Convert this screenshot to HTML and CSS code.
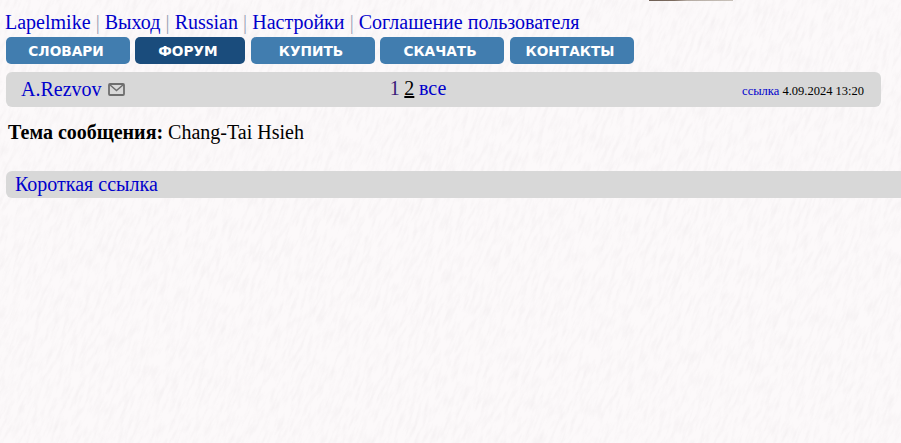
FILE: index.html
```html
<!DOCTYPE html>
<html lang="ru">
<head>
<meta charset="utf-8">
<title>Chang-Tai Hsieh</title>
<link rel="stylesheet" href="styles.css">
</head>
<body>
<div class="logo-edge"></div>
<nav class="toplinks">
  <a href="#">Lapelmike</a> <span class="sep">|</span> <a href="#">Выход</a> <span class="sep">|</span> <a href="#">Russian</a> <span class="sep">|</span> <a href="#">Настройки</a> <span class="sep">|</span> <a href="#">Соглашение пользователя</a>
</nav>
<div class="menu">
  <a class="btn" href="#">СЛОВАРИ</a>
  <a class="btn btn-forum btn-active" href="#">ФОРУМ</a>
  <a class="btn" href="#">КУПИТЬ</a>
  <a class="btn btn-gap" href="#">СКАЧАТЬ</a>
  <a class="btn" href="#">КОНТАКТЫ</a>
</div>
<div class="postbar">
  <div class="author">
    <a href="#">A.Rezvov</a>
    <svg class="mail" width="17" height="13" viewBox="0 0 17 13" aria-hidden="true"><rect x="1" y="1" width="15" height="11" rx="1" fill="none" stroke="#6e6e6e" stroke-width="1.800"/><path d="M1.500 1.500 8.500 7.500l7-6" fill="none" stroke="#6e6e6e" stroke-width="1.500"/></svg>
  </div>
  <div class="pages"><a class="visited" href="#">1</a> <b class="current">2</b> <a href="#">все</a></div>
  <div class="stamp"><a href="#">ссылка</a> 4.09.2024 13:20</div>
</div>
<p class="subject"><b>Тема сообщения:</b> Chang-Tai Hsieh</p>
<div class="shortlink"><a href="#">Короткая ссылка</a></div>
</body>
</html>
```

FILE: styles.css
```css
html, body { height: 100%; }
body {
  margin: 0;
  overflow: hidden;
  font-family: "Liberation Serif", serif;
  color: #000;
  background-color: #fcf9fa;
  background-image: url("data:image/svg+xml,%3Csvg xmlns='http://www.w3.org/2000/svg' width='901' height='443'%3E%3Cfilter id='t' x='0' y='0' width='100%25' height='100%25'%3E%3CfeTurbulence type='fractalNoise' baseFrequency='0.28 0.06' numOctaves='3' seed='7'/%3E%3CfeColorMatrix values='0 0 0 0 0.72 0 0 0 0 0.68 0 0 0 0 0.70 1.6 0 0 0 -0.66'/%3E%3C/filter%3E%3Cg transform='rotate(22 450 220)'%3E%3Crect x='-300' y='-400' width='1500' height='1300' filter='url(%23t)' opacity='.3'/%3E%3C/g%3E%3C/svg%3E");
}
a { color: #0000cc; text-decoration: none; }
.logo-edge {
  position: absolute;
  left: 649px;
  top: 0;
  width: 84px;
  height: 1px;
  background: linear-gradient(90deg, #6f5f55 0, #7d6c60 30%, #b5aba3 45%, #c9c2bb 100%);
}
.toplinks {
  padding: 11px 0 0 5px;
  height: 26px;
  font-size: 20px;
  line-height: 23px;
  word-spacing: 0.100px;
  white-space: nowrap;
}
.sep { color: #9aa3b5; }
.menu {
  display: flex;
  gap: 5px;
  margin-left: 6px;
}
.btn {
  display: block;
  width: 124px;
  height: 27px;
  box-sizing: border-box;
  padding-right: 4px;
  border-radius: 5px;
  background: #417daf;
  color: #fff;
  font-family: "DejaVu Sans", sans-serif;
  font-weight: 700;
  font-size: 13.700px;
  line-height: 28px;
  text-align: center;
}
.btn-forum { width: 110px; margin-right: 1px; }
.btn-gap { margin-right: 1px; }
.btn-active { background: #1a4c7c; }
.postbar {
  display: grid;
  grid-template-columns: 1fr auto 1fr;
  align-items: center;
  width: 875px;
  height: 35px;
  box-sizing: border-box;
  margin: 8px 0 0 6px;
  padding: 0 17px 0 15px;
  border-radius: 6px;
  background: #d8d8d8;
}
.author { display: flex; align-items: center; gap: 6px; font-size: 20px; }
.mail { margin-top: 0; }
.pages { font-size: 20px; margin-left: -49px; margin-top: -3px; word-spacing: -0.300px; }
.visited { color: #3a1a7a; }
.current { font-weight: 400; text-decoration: underline; text-decoration-thickness: 2px; }
.stamp { font-size: 12.500px; text-align: right; margin-top: 3px; }
.subject { margin: 14px 0 0 8px; font-size: 20px; line-height: 22px; }
.shortlink {
  margin: 28px 0 0 6px;
  height: 27px;
  padding-left: 9px;
  border-radius: 6px 0 0 6px;
  background: #d8d8d8;
  font-size: 20px;
  line-height: 27px;
}
```
